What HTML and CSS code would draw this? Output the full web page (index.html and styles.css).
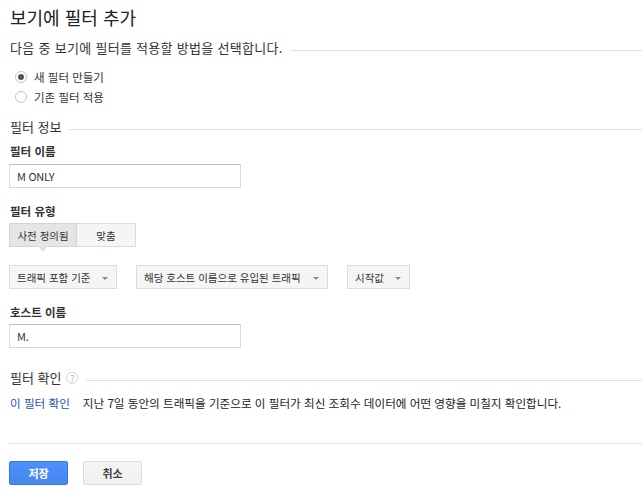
FILE: index.html
```html
<!DOCTYPE html>
<html lang="ko">
<head>
    <meta charset="UTF-8">
    <meta name="viewport" content="width=device-width, initial-scale=1.0">
    <title>보기에 필터 추가</title>
    <link rel="stylesheet" href="styles.css">
</head>
<body>
    <div class="container">
        <h1>보기에 필터 추가</h1>

        <div class="section-head intro">
            <h2>다음 중 보기에 필터를 적용할 방법을 선택합니다.</h2>
            <span class="rule"></span>
        </div>

        <div class="radio-group">
            <div class="radio"><span class="radio-dot checked"></span>새 필터 만들기</div>
            <div class="radio"><span class="radio-dot"></span>기존 필터 적용</div>
        </div>

        <div class="section-head info">
            <h2>필터 정보</h2>
            <span class="rule"></span>
        </div>

        <label class="field-label" for="filter-name">필터 이름</label>
        <input class="text-input" id="filter-name" type="text" value="M ONLY">

        <div class="field-label type-label">필터 유형</div>
        <div class="tabs">
            <div class="tab tab-predefined selected">사전 정의됨</div>
            <div class="tab tab-custom">맞춤</div>
        </div>

        <div class="selects">
            <div class="select select-traffic">트래픽 포함 기준<span class="caret"></span></div>
            <div class="select select-host">해당 호스트 이름으로 유입된 트래픽<span class="caret"></span></div>
            <div class="select select-match">시작값<span class="caret"></span></div>
        </div>

        <label class="field-label host-label" for="host-name">호스트 이름</label>
        <input class="text-input host-input" id="host-name" type="text" value="M.">

        <div class="section-head verify">
            <h2>필터 확인<span class="help">?</span></h2>
            <span class="rule"></span>
        </div>

        <div class="verify-row">
            <a class="verify-link" href="#">이 필터 확인</a>
            <span>지난 7일 동안의 트래픽을 기준으로 이 필터가 최신 조회수 데이터에 어떤 영향을 미칠지 확인합니다.</span>
        </div>

        <div class="divider"></div>

        <div class="actions">
            <button class="btn btn-save">저장</button>
            <button class="btn btn-cancel">취소</button>
        </div>
    </div>
</body>
</html>
```

FILE: styles.css
```css
* {
    box-sizing: border-box;
    margin: 0;
    padding: 0;
}

body {
    font-family: "Noto Sans CJK KR", "Liberation Sans", sans-serif;
    color: #222;
    background-color: #fff;
}

.container {
    padding: 5px 0 0 9px;
}

h1 {
    font-size: 18px;
    font-weight: normal;
    line-height: 24px;
    padding-left: 1px;
}

/* section titles with a grey rule to the right */
.section-head {
    display: flex;
    align-items: center;
    gap: 8px;
}

.section-head h2 {
    display: flex;
    align-items: center;
    font-size: 13px;
    font-weight: normal;
    line-height: 18px;
    padding-left: 1px;
    white-space: nowrap;
    color: #333;
}

.rule {
    flex: 1;
    height: 1px;
    margin-top: 5px;
    background-color: #e0e0e0;
}

.intro {
    margin-top: 10px;
}

.intro h2 {
    letter-spacing: 0.3px;
}

.info {
    margin-top: 11px;
}

.verify {
    margin-top: 21px;
}

.help {
    display: inline-flex;
    align-items: center;
    justify-content: center;
    width: 12px;
    height: 12px;
    margin-left: 5px;
    border: 1px solid #d6d6d6;
    border-radius: 50%;
    font-size: 9px;
    line-height: 1;
    color: #b5b5b5;
}

/* radios */
.radio-group {
    margin-top: 10px;
}

.radio {
    display: flex;
    align-items: center;
    gap: 7px;
    height: 20px;
    padding-left: 6px;
    font-size: 11.5px;
    color: #333;
}

.radio-dot {
    display: flex;
    align-items: center;
    justify-content: center;
    width: 12px;
    height: 12px;
    border: 1px solid #c2c2c2;
    border-radius: 50%;
    background-color: #fff;
}

.radio-dot.checked::after {
    content: "";
    width: 6px;
    height: 6px;
    border-radius: 50%;
    background-color: #555;
}

/* fields */
.field-label {
    display: block;
    margin-top: 7px;
    padding-left: 1px;
    font-size: 11.5px;
    font-weight: bold;
    line-height: 16px;
    color: #333;
}

.type-label,
.host-label {
    margin-top: 15px;
}

.text-input {
    display: block;
    width: 232px;
    height: 24px;
    margin-top: 5px;
    padding: 0 7px;
    border: 1px solid #d9d9d9;
    border-top-color: #c0c0c0;
    font-family: inherit;
    font-size: 11px;
    letter-spacing: -0.3px;
    color: #333;
    outline: none;
}

.host-input {
    margin-top: 4px;
}

/* predefined / custom tabs */
.tabs {
    display: flex;
    margin-top: 4px;
}

.tab {
    display: flex;
    align-items: center;
    justify-content: center;
    position: relative;
    height: 24px;
    border: 1px solid #dcdcdc;
    background-color: #f5f5f5;
    font-size: 10.5px;
    color: #333;
}

.tab-predefined {
    width: 68px;
}

.tab-custom {
    width: 59px;
    border-left: none;
}

.tab.selected {
    background-color: #e5e5e5;
    border-color: #d4d4d4;
}

.tab.selected::after {
    content: "";
    position: absolute;
    top: 100%;
    left: 50%;
    margin-left: -5px;
    border-left: 5px solid transparent;
    border-right: 5px solid transparent;
    border-top: 6px solid #e2e2e2;
}

/* dropdowns */
.selects {
    display: flex;
    gap: 19px;
    margin-top: 18px;
}

.select {
    display: flex;
    align-items: center;
    justify-content: space-between;
    height: 24px;
    padding: 0 8px 0 7px;
    border: 1px solid #dcdcdc;
    background-color: #f5f5f5;
    font-size: 10.5px;
    color: #333;
    white-space: nowrap;
}

.select-traffic {
    width: 108px;
}

.select-host {
    width: 192px;
}

.select-match {
    width: 63px;
}

.caret {
    width: 0;
    height: 0;
    margin-top: 2px;
    border-left: 3px solid transparent;
    border-right: 3px solid transparent;
    border-top: 3px solid #8a8a8a;
}

/* verify */
.verify-row {
    display: flex;
    gap: 13px;
    margin-top: 8px;
    padding-left: 1px;
    font-size: 11.6px;
    line-height: 16px;
    color: #222;
}

.verify-link {
    color: #1a55b0;
    text-decoration: none;
}

.divider {
    height: 1px;
    margin-top: 32px;
    background-color: #e2e2e2;
}

/* buttons */
.actions {
    display: flex;
    gap: 15px;
    margin-top: 17px;
}

.btn {
    width: 59px;
    height: 24px;
    border-radius: 2px;
    font-family: inherit;
    font-size: 11px;
    font-weight: bold;
    cursor: pointer;
}

.btn-save {
    border: 1px solid #3079ed;
    background: linear-gradient(#4d90fe, #4787ed);
    color: #fff;
}

.btn-cancel {
    border: 1px solid #dcdcdc;
    background: linear-gradient(#f5f5f5, #f1f1f1);
    color: #444;
}
```
